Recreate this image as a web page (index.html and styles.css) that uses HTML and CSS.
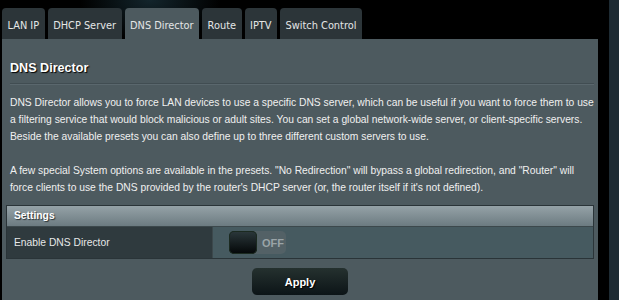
FILE: index.html
```html
<!DOCTYPE html>
<html>
<head>
<meta charset="utf-8">
<link rel="stylesheet" href="styles.css">
</head>
<body>
<div class="page">
  <div class="main">
    <div class="tabs">
      <div class="tab">LAN IP</div>
      <div class="tab">DHCP Server</div>
      <div class="tab active">DNS Director</div>
      <div class="tab">Route</div>
      <div class="tab">IPTV</div>
      <div class="tab">Switch Control</div>
    </div>
    <div class="panel">
      <div class="title">DNS Director</div>
      <div class="divider"></div>
      <div class="desc">
        <p>DNS Director allows you to force LAN devices to use a specific DNS server, which can be useful if you want to force them to use a filtering service that would block malicious or adult sites. You can set a global network-wide server, or client-specific servers. Beside the available presets you can also define up to three different custom servers to use.</p>
        <p>A few special System options are available in the presets. "No Redirection" will bypass a global redirection, and "Router" will force clients to use the DNS provided by the router's DHCP server (or, the router itself if it's not defined).</p>
      </div>
      <div class="settings">
        <div class="settings-head">Settings</div>
        <div class="settings-row">
          <div class="label">Enable DNS Director</div>
          <div class="value">
            <div class="toggle">
              <div class="knob"></div>
              <span class="toggle-text">OFF</span>
            </div>
          </div>
        </div>
      </div>
      <div class="actions">
        <button class="apply">Apply</button>
      </div>
    </div>
  </div>
  <div class="side"></div>
</div>
</body>
</html>
```
FILE: styles.css
```css
html, body {
  margin: 0;
  padding: 0;
  background: #000;
  height: 300px;
  overflow: hidden;
}

.page {
  display: flex;
  height: 300px;
  background: radial-gradient(ellipse 70px 40px at 150px 0, #13252c, rgba(0,0,0,0));
}

.main {
  margin-left: 2px;
  width: 596px;
  display: flex;
  flex-direction: column;
}

.side {
  margin-left: 11px;
  width: 10px;
  background: #1e2b33;
}

.tabs {
  display: flex;
  gap: 3px;
  margin-top: 8px;
  height: 31px;
}

.tab {
  font-family: "DejaVu Sans", Verdana, sans-serif;
  font-size: 9.8px;
  color: #e4e6e6;
  background: #2c3539;
  border-radius: 4px 4px 0 0;
  padding: 3px 5.5px 0 5.5px;
  display: flex;
  align-items: center;
  justify-content: center;
  box-sizing: border-box;
}

.tab.active {
  background: #4d5a5f;
}

.panel {
  flex: 1;
  background: #4d5a5f;
  padding: 22px 4px 0 4px;
}

.title {
  font-family: "Liberation Sans", Arial, sans-serif;
  font-weight: bold;
  font-size: 12.6px;
  line-height: 16px;
  color: #fff;
  text-shadow: 1px 1px 1px #000;
  margin-left: 4px;
  margin-top: -1px;
}

.divider {
  height: 1px;
  background: #5a676d;
  border-top: 1px solid #414d52;
  margin: 7px 0 0 4px;
}

.desc {
  font-family: "Liberation Sans", Arial, sans-serif;
  font-size: 10.3px;
  line-height: 17px;
  color: #f0f0f0;
  margin: 9px 0 0 4px;
}

.desc p {
  margin: 0 0 17px 0;
}

.desc p:last-child {
  margin-bottom: 0;
}

.settings {
  margin: 9px 0 0 0;
  width: 588px;
  border: 1px solid #2a3438;
  box-sizing: border-box;
  font-family: "Liberation Sans", Arial, sans-serif;
  font-size: 10.3px;
}

.settings-head {
  height: 20px;
  line-height: 20px;
  padding-left: 7px;
  font-weight: bold;
  color: #fff;
  text-shadow: 1px 1px 1px #2a3336;
  background: linear-gradient(#95a2a7, #6c7b81);
  border-bottom: 1px solid #3c484c;
}

.settings-row {
  display: flex;
  height: 31px;
}

.label {
  width: 198px;
  padding-left: 7px;
  background: #2f3a3e;
  color: #e6e8e8;
  display: flex;
  align-items: center;
  border-right: 1px solid #3c484c;
}

.value {
  flex: 1;
  background: #465a60;
  display: flex;
  align-items: center;
  padding-left: 16px;
}

.toggle {
  width: 57px;
  height: 23px;
  border-radius: 5px;
  background: #536166;
  display: flex;
  align-items: center;
}

.knob {
  width: 28px;
  height: 23px;
  border-radius: 5px;
  background: linear-gradient(#2c393c, #030607);
  box-shadow: inset 0 0 0 1px #1b2a20;
}

.toggle-text {
  margin-left: 5px;
  font-family: "Liberation Sans", Arial, sans-serif;
  font-weight: bold;
  font-size: 11px;
  color: #9aa4a7;
}

.actions {
  display: flex;
  justify-content: center;
  margin-top: 9px;
}

.apply {
  width: 96px;
  height: 27px;
  border: none;
  border-radius: 5px;
  background: linear-gradient(#25312f, #0c1417);
  color: #fff;
  font-family: "Liberation Sans", Arial, sans-serif;
  font-weight: bold;
  font-size: 11px;
  text-shadow: 1px 1px 1px #000;
  padding: 0;
}
```
